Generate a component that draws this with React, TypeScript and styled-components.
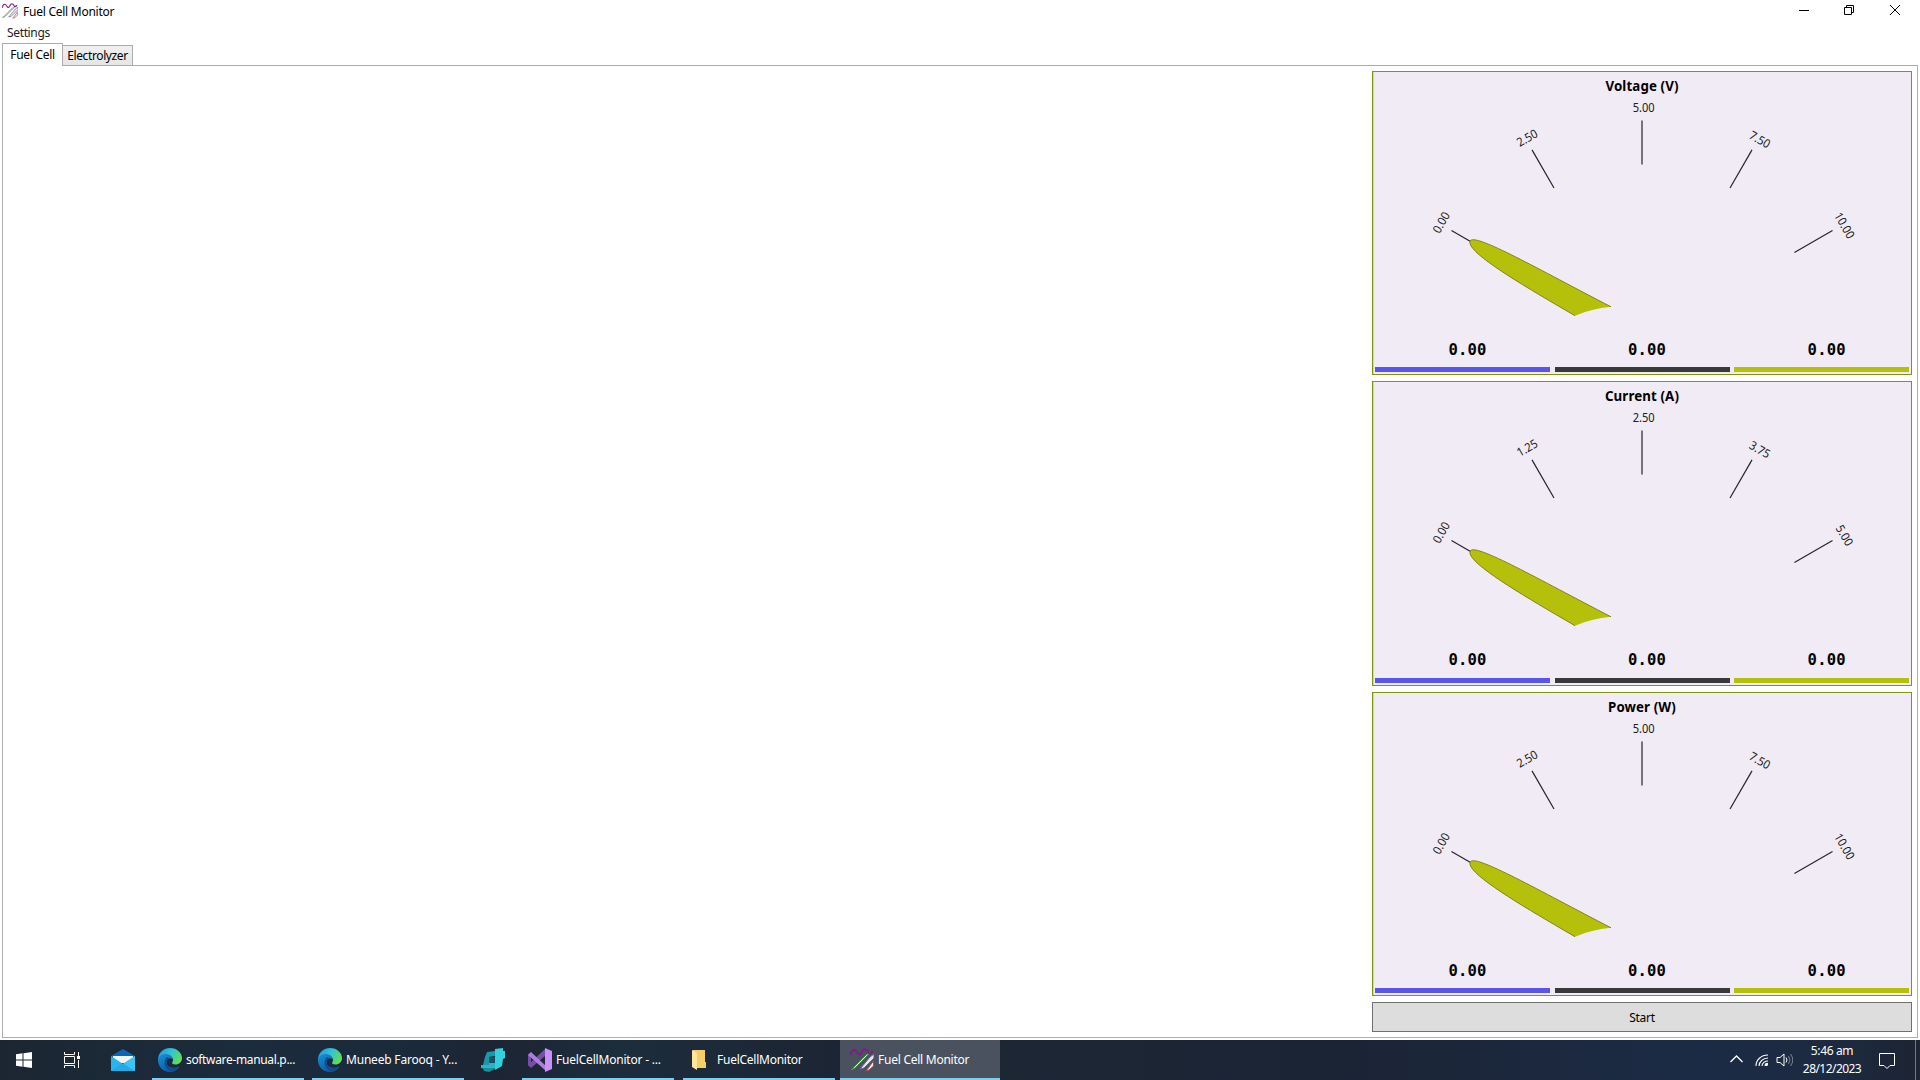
import React from "react";
import styled, { createGlobalStyle } from "styled-components";

const Global = createGlobalStyle`
  * { box-sizing: border-box; }
  html, body { margin: 0; padding: 0; background: #fff; overflow: hidden; }
`;

const ui = `"Noto Sans", "Open Sans", sans-serif`;

const Desktop = styled.div`
  width: 1920px;
  height: 1080px;
  display: flex;
  flex-direction: column;
  background: #fff;
  font-family: ${ui};
  font-size: 12px;
  color: #000;
`;

const Label = styled.span<{ $ls?: number; $size?: number; $color?: string; $bold?: boolean }>`
  white-space: nowrap;
  line-height: 16px;
  font-size: ${(p) => p.$size ?? 12}px;
  font-weight: ${(p) => (p.$bold ? 700 : 400)};
  letter-spacing: ${(p) => p.$ls ?? 0}px;
  color: ${(p) => p.$color ?? "#000"};
`;

const TitleBar = styled.header`
  height: 23px;
  display: flex;
  align-items: flex-start;
  justify-content: space-between;
  padding: 3px 20px 0 2px;
`;

const TitleName = styled.div`
  display: flex;
  align-items: flex-start;
  gap: 5px;
  & > span { padding-top: 1px; }
`;

const WindowButtons = styled.div`
  display: flex;
  gap: 36px;
  padding-top: 2px;
  & > svg:first-child { margin-right: -1px; }
`;

const MenuBar = styled.nav`
  height: 20px;
  padding: 2px 7px 0;
  display: flex;
`;

const TabStrip = styled.div`
  height: 22px;
  display: flex;
  align-items: flex-end;
  padding-left: 2px;
`;

const Tab = styled.div<{ $active?: boolean }>`
  width: ${(p) => (p.$active ? 61 : 70)}px;
  height: ${(p) => (p.$active ? 23 : 20)}px;
  margin-bottom: ${(p) => (p.$active ? -1 : 0)}px;
  border: 1px solid #acacac;
  border-bottom: 0;
  border-left-width: ${(p) => (p.$active ? 1 : 0)}px;
  background: ${(p) => (p.$active ? "#fff" : "linear-gradient(#f0f0f0, #e5e5e5)")};
  display: flex;
  justify-content: center;
  padding-top: ${(p) => (p.$active ? 3 : 2)}px;
  z-index: 1;
`;

const Content = styled.main`
  width: 1916px;
  height: 973px;
  margin: 0 2px;
  border: 1px solid #acacac;
  display: flex;
  justify-content: flex-end;
  padding: 5px 5px 4px 0;
`;

const SideColumn = styled.aside`
  width: 540px;
  display: flex;
  flex-direction: column;
  gap: 6px;
`;

const Card = styled.section`
  width: 540px;
  height: 304.33px;
  border: 1px solid #7f960f;
  box-shadow: inset 1px 0 0 #d5dba0;
  background: #f0ebf5;
  display: flex;
  flex-direction: column;
`;

const Heading = styled.h2`
  margin: 0;
  height: 28px;
  padding-top: 6px;
  display: flex;
  justify-content: center;
`;

const Dial = styled.svg`
  display: block;
  width: 538px;
  height: 237px;
  font-family: ${ui};
  font-size: 12px;
`;

const Readouts = styled.div`
  display: grid;
  grid-template-columns: repeat(3, 175px);
  column-gap: 4.6px;
  padding-left: 2px;
`;

const Readout = styled.div<{ $color: string }>`
  height: 35.3px;
  border-bottom: 5px solid ${(p) => p.$color};
  padding: 4px 0 0 10px;
  text-align: center;
  font: bold 15.5px/18px "DejaVu Sans Mono", monospace;
  letter-spacing: 0.2px;
`;

const StartButton = styled.button`
  width: 540px;
  height: 30px;
  padding: 2px 0 0;
  border: 1px solid #707070;
  background: #ddd;
  font-family: inherit;
  display: flex;
  align-items: center;
  justify-content: center;
`;

const TaskBar = styled.footer`
  height: 40px;
  margin-top: 2px;
  display: flex;
  background: linear-gradient(90deg, #1c2632 0, #1b2c3c 240px, #1b2a3a 420px, #1d2433 490px, #1c2d3c 620px, #1c2534 830px, #1d2633 1000px, #1b2435 1350px, #1c2b45 1700px, #1c2b42 1820px, #1d2433 1920px);
`;

const AppButton = styled.div<{ $w: number; $mr?: number; $pad?: number; $gap?: number; $open?: boolean; $active?: boolean }>`
  width: ${(p) => p.$w}px;
  margin-right: ${(p) => p.$mr ?? 0}px;
  padding-left: ${(p) => p.$pad ?? 0}px;
  height: 40px;
  display: flex;
  align-items: center;
  gap: ${(p) => p.$gap ?? 4}px;
  background: ${(p) => (p.$active ? "#4b525f" : "transparent")};
  border-bottom: 2px solid ${(p) => (p.$open ? "#76d1f5" : "transparent")};
  & > svg { flex: none; position: relative; top: 1px; }
  & > span { padding-top: 2px; }
`;

const Tray = styled.div`
  flex: 1;
  display: flex;
  justify-content: flex-end;
  align-items: center;
`;

const Clock = styled.div`
  width: 60px;
  margin: 0 17px 0 9px;
  display: flex;
  flex-direction: column;
  align-items: center;
  gap: 2px;
`;

const ShowDesktop = styled.div`
  width: 5px;
  height: 40px;
  margin-left: 20px;
  border-left: 1px solid #737b86;
`;

const AppLogo = ({ size }: { size: number }) => (
  <svg width={size} height={size} viewBox="0 0 24 24" fill="none">
    <path d="M1 22 16 7l5-3L5 20Z" fill="#ececec" stroke="#4a8a4a" strokeWidth="1" />
    <path d="M10 21 20 9l4-3v4l-10 10Z" fill="#e6e6ea" stroke="#6963aa" strokeWidth="1" />
    <path d="M16 23 23.500 13v5l-4.500 4Z" fill="#eee" stroke="#b04a4a" strokeWidth="1" />
    <path d="M.7 7C1 2 4 .8 6 3s2 4.500 4 3.500S12 1 15 1s3 5 5 4.500 2-2.500 3-2" stroke="#8a1292" strokeWidth="1.600" />
  </svg>
);

const EdgeLogo = () => (
  <svg width="24" height="24" viewBox="0 0 24 24">
    <defs>
      <linearGradient id="edgeTop" x1="0" y1=".2" x2="1" y2=".6">
        <stop offset="0" stopColor="#2497d5" />
        <stop offset=".5" stopColor="#32c3d5" />
        <stop offset="1" stopColor="#65df4b" />
      </linearGradient>
      <linearGradient id="edgeLow" x1="0" y1="0" x2=".6" y2="1">
        <stop offset="0" stopColor="#1490d8" />
        <stop offset="1" stopColor="#0c59a4" />
      </linearGradient>
    </defs>
    <path d="M0 12C0 5 5 0 12 0s12 5 12 10c0 4-3 6.500-6.500 6.500-3 0-4-1.200-3.200-2.300 1.500-2 .7-5.700-3.300-6C6 7.500 1 10 0 14Z" fill="url(#edgeTop)" />
    <path d="M0 12C.8 8 4 6 8 6c4 0 6.500 2.500 6.500 5-4-2-6 1-6 3.500 0 4 5 7 13 4C19 22 16 24 12 24 5 24 0 18.500 0 12Z" fill="url(#edgeLow)" />
    <path d="M9 9c-5 5-2 13 5 14.800 3-.5 6-2.500 7.500-5.300-6 3-13 1-13-4C8.500 12 9.500 10 12 10Z" fill="#0f4c91" />
  </svg>
);

const VsLogo = () => (
  <svg width="24" height="24" viewBox="0 0 24 24">
    <path d="M0 7 3 4v15l-3-2Z" fill="#7550a5" />
    <path d="M0 17 17 1v7L3 20Z" fill="#7550a5" />
    <path d="m3 4 15 14v5L0 7Z" fill="#ad7ce0" />
    <path d="m17 0 7 3v18l-7 3Z" fill="#c792f4" />
  </svg>
);

type GaugeProps = { title: string; marks: string[] };

const CX = 269;
const CY = 240.4;
const anglesDeg = [-60, -30, 0, 30, 60];

const Gauge = ({ title, marks }: GaugeProps) => (
  <Card>
    <Heading>
      <Label $bold $size={13.3} $ls={0.12}>{title}</Label>
    </Heading>
    <Dial viewBox="0 0 538 237">
      {marks.map((m, i) => (
        <g key={i} transform={`rotate(${anglesDeg[i]} ${CX} ${CY})`}>
          <line x1={CX} x2={CX} y1={CY - 220} y2={CY - 176} stroke="#26232b" strokeWidth="1.2" />
          <text x={CX + 1.7} y={CY - 228.6} textAnchor="middle" fill="#202020" textLength={m.length > 4 ? 28 : 22} lengthAdjust="spacingAndGlyphs">
            {m}
          </text>
        </g>
      ))}
      <path
        d="M202 215.700 C150.500 185.700 90 150.600 97.500 140.500 C104 134 165 169 238 206.800 Q218.500 208.600 202 215.700Z"
        fill="#b5c00a"
      />
      <path
        d="M202 215.700 C150.500 185.700 90 150.600 97.500 140.500 C104 134 165 169 238 206.800"
        fill="none"
        stroke="#85821b"
      />
    </Dial>
    <Readouts>
      <Readout $color="#5855e8">0.00</Readout>
      <Readout $color="#39383a">0.00</Readout>
      <Readout $color="#b5c00a">0.00</Readout>
    </Readouts>
  </Card>
);

export default function App() {
  return (
    <Desktop>
      <Global />
      <TitleBar>
        <TitleName>
          <AppLogo size={16} />
          <Label $ls={-0.25}>Fuel Cell Monitor</Label>
        </TitleName>
        <WindowButtons>
          <svg width="10" height="10"><path d="M0 5.500h10" stroke="#000" /></svg>
          <svg width="10" height="10" fill="none" stroke="#000"><path d="M.5 2.500h7v7h-7zM2.500 2.500v-2h7v7h-2" /></svg>
          <svg width="10" height="10" fill="none" stroke="#000"><path d="m0 0 10 10M10 0 0 10" /></svg>
        </WindowButtons>
      </TitleBar>
      <MenuBar>
        <Label $ls={-0.35} $color="#212121">Settings</Label>
      </MenuBar>
      <TabStrip>
        <Tab $active><Label $ls={-0.3}>Fuel Cell</Label></Tab>
        <Tab><Label $ls={-0.38}>Electrolyzer</Label></Tab>
      </TabStrip>
      <Content>
        <SideColumn>
          <Gauge title="Voltage (V)" marks={["0.00", "2.50", "5.00", "7.50", "10.00"]} />
          <Gauge title="Current (A)" marks={["0.00", "1.25", "2.50", "3.75", "5.00"]} />
          <Gauge title="Power (W)" marks={["0.00", "2.50", "5.00", "7.50", "10.00"]} />
          <StartButton><Label $ls={-0.3}>Start</Label></StartButton>
        </SideColumn>
      </Content>
      <TaskBar>
        <AppButton $w={48} $pad={16}>
          <svg width="16" height="16" fill="#fff"><path d="M0 2.200 6.500 1.300v6.200H0zM7.500 1.200 16 0v7.500H7.500zM0 8.500h6.500v6.200L0 13.800zM7.500 8.500H16V16l-8.500-1.200z" /></svg>
        </AppButton>
        <AppButton $w={48} $pad={16}>
          <svg width="16" height="16" fill="none" stroke="#fff"><path d="M.5 0v2.500h10V0M.5 16v-2.500h10V16M.5 4.500h10v7H.5zM14.500 0v4M14.500 8v8" /><path d="M13 4h3v3h-3z" fill="#fff" stroke="none" /></svg>
        </AppButton>
        <AppButton $w={56} $pad={15}>
          <svg width="24" height="22" viewBox="0 0 24 22"><path d="M0 7 12 0l12 7v3H0Z" fill="#0b65b9" /><path d="M2 7h20v7H2Z" fill="#f4f4f4" /><path d="m0 7 12 8 12-8v15H0Z" fill="#28b4ef" /><path d="m12 15 12-8v15Z" fill="#3cc5f4" /><path d="M0 22h24L12 14Z" fill="#1b9fe4" opacity=".5" /></svg>
        </AppButton>
        <AppButton $w={152} $mr={8} $pad={6} $open><EdgeLogo /><Label $ls={-0.34} $color="#fff">software-manual.p...</Label></AppButton>
        <AppButton $w={152} $pad={6} $open><EdgeLogo /><Label $ls={-0.2} $color="#fff">Muneeb Farooq - Y...</Label></AppButton>
        <AppButton $w={58} $pad={17}>
          <svg width="24" height="24" viewBox="0 0 24 24">
            <path d="M6 4 14 3v5l-6 1v8H2l2-8Z" fill="#1a98ab" />
            <path d="M8 9h6v6H8Z" fill="#16505f" />
            <path d="m14 1 8-1v3h2v7l-2 1-1 7-7 4Z" fill="#32d0dd" />
            <path d="M0 17h8v-2h6v5l-8 3-1-2-5-1Z" fill="#2bb4c6" />
            <path d="M2 20h12v1l-6 3-5-1Z" fill="#1b8b9e" />
          </svg>
        </AppButton>
        <AppButton $w={152} $mr={9} $pad={6} $open><VsLogo /><Label $ls={-0.2} $color="#fff">FuelCellMonitor - ...</Label></AppButton>
        <AppButton $w={152} $mr={5} $pad={9} $gap={11} $open>
          <svg width="14" height="20" viewBox="0 0 14 20"><path d="M1 0h12v12h1v6H4L1 15Z" fill="#f4ce67" /><path d="m0 0 5 3v17l-5-3Z" fill="#ffe69d" /></svg>
          <Label $ls={-0.25} $color="#fff">FuelCellMonitor</Label>
        </AppButton>
        <AppButton $w={160} $pad={10} $gap={4} $open $active><AppLogo size={24} /><Label $ls={-0.25} $color="#fff">Fuel Cell Monitor</Label></AppButton>
        <Tray>
          <svg width="63" height="16" viewBox="0 0 63 16" fill="none" stroke="#fff">
            <path d="m.5 10 6-6 6 6" strokeWidth="1.300" />
            <path d="M26 14C26 8 31 3 38 3M29 14c0-4 4-8 9-8M32 14c0-3 3-5 6-5M35 14c0-1.500 1.500-2.500 3-2.500" strokeWidth="1.100" />
            <circle cx="36.500" cy="12.500" r="1.500" fill="#fff" stroke="none" />
            <path d="M47 5.500h3l4-3.500v12l-4-3.500h-3z" />
            <path d="M56 5.500q2 2.500 0 5" />
            <path d="M58.500 4q3 4 0 8M60.500 2q4.500 6 0 12" stroke="#7b8492" />
          </svg>
          <Clock>
            <Label $ls={-0.35} $color="#fff">5:46 am</Label>
            <Label $ls={-0.55} $color="#fff">28/12/2023</Label>
          </Clock>
          <svg width="16" height="17" fill="none" stroke="#fff"><path d="M.5 1.500h15v12H11l-3 3-3-3H.5z" /></svg>
          <ShowDesktop />
        </Tray>
      </TaskBar>
    </Desktop>
  );
}
